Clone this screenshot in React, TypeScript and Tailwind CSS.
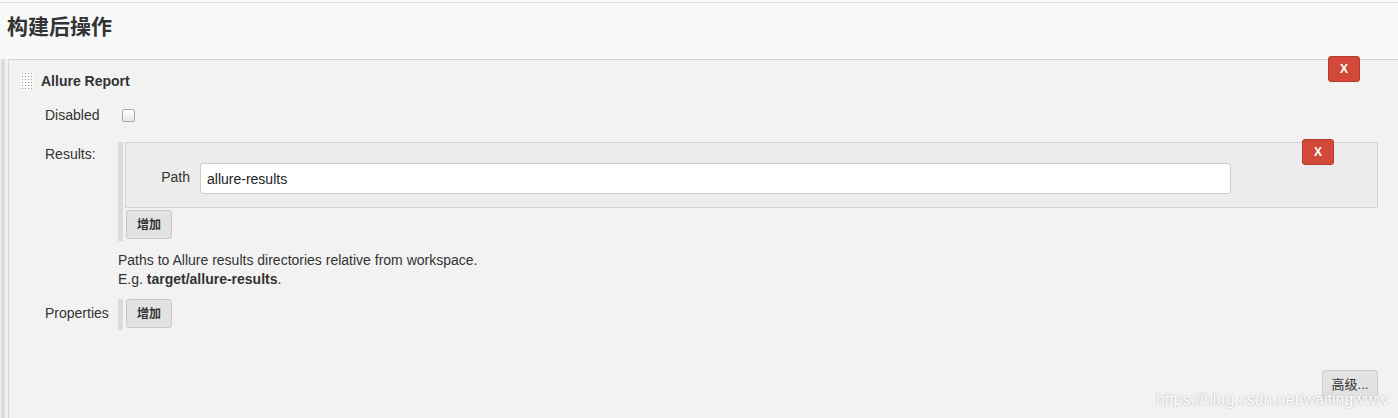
import React from "react";

function Handle() {
  const dots: React.ReactNode[] = [];
  for (let r = 0; r < 6; r++) {
    for (let c = 0; c < 4; c++) {
      dots.push(<rect key={`${r}-${c}`} x={1 + c * 3} y={1 + r * 3} width={1} height={1} fill="#9a9a9a" />);
    }
  }
  return (
    <svg width="12" height="18" viewBox="0 0 12 18" className="block">
      <rect x="0" y="0" width="12" height="18" fill="#fafafa" />
      {dots}
    </svg>
  );
}

function RedX({ className }: { className: string }) {
  return (
    <button
      className={
        "absolute w-[32px] h-[26px] rounded-[3px] bg-[#d24939] border border-[#b93a2c] text-white text-[12px] font-bold leading-none flex items-center justify-center " +
        className
      }
    >
      X
    </button>
  );
}

function AddButton() {
  return (
    <button className="ml-[3px] w-[46px] h-[29px] rounded-[3px] bg-[#e2e2e2] border border-[#c9c9c9] text-[12px] font-bold text-[#333] leading-none flex items-center justify-center">
      增加
    </button>
  );
}

export default function App() {
  return (
    <div className="relative w-[1398px] h-[418px] overflow-hidden bg-[#f9f9f9] text-[#333] font-['Liberation_Sans','Noto_Sans_CJK_SC',Arial,sans-serif]">
      <div className="mt-[2px] h-[57px] border-t border-[#dddddd] pl-[7px] pt-[8px]">
        <h2 className="text-[21px] leading-[28px] font-bold text-[#333] font-['Noto_Sans_CJK_SC','Liberation_Sans',sans-serif]">
          构建后操作
        </h2>
      </div>
      <div className="flex h-[359px]">
        <div className="w-[1px] bg-[#f2f2f2]" />
        <div className="w-[4px] bg-[#dcdcdc]" />
        <div className="w-[3px] bg-[#f2f2f2]" />
        <div className="relative flex-1 border-l border-t border-[#d5d5d5] bg-[#f2f2f2] pl-[12px] pt-[12px]">
          <RedX className="top-[-4px] right-[38px]" />
          <div className="flex items-center h-[18px] gap-[8px]">
            <Handle />
            <span className="text-[14px] font-bold text-[#333]">Allure Report</span>
          </div>
          <div className="pl-[24px]">
            <div className="mt-[14px] flex items-center h-[22px]">
              <div className="w-[73px] text-[14px]">Disabled</div>
              <span className="ml-[4px] w-[13px] h-[13px] rounded-[2px] border border-[#a6a6a6] bg-gradient-to-b from-[#ffffff] to-[#e6e6e6]" />
            </div>
            <div className="mt-[16px] flex">
              <div className="w-[73px] text-[14px] leading-[20px] mt-[2px]">Results:</div>
              <div className="flex-1 pr-[20px]">
                <div className="flex">
                  <div className="w-[5px] bg-[#dcdcdc]" />
                  <div className="flex-1 ml-[2px]">
                    <div className="relative h-[66px] border border-[#d5d5d5] bg-[#ececec] pt-[20px] flex items-start">
                      <RedX className="top-[-4px] right-[43px] h-[25px]" />
                      <div className="w-[65px] text-right text-[14px] leading-[31px] h-[31px] pr-[1px] -mt-[1px]">Path</div>
                      <input
                        readOnly
                        value="allure-results"
                        className="ml-[9px] w-[1031px] h-[31px] rounded-[3px] border border-[#cccccc] bg-white px-[6px] text-[14px] text-[#222] outline-none"
                      />
                    </div>
                    <div className="pt-[2px] pb-[2px] -ml-[2px]">
                      <AddButton />
                    </div>
                  </div>
                </div>
                <div className="mt-[10px] text-[14px] leading-[19px]">
                  <div>Paths to Allure results directories relative from workspace.</div>
                  <div>
                    E.g. <b className="font-bold">target/allure-results</b>.
                  </div>
                </div>
              </div>
            </div>
            <div className="mt-[10px] flex">
              <div className="w-[73px] text-[14px] leading-[20px] mt-[4px]">Properties</div>
              <div className="flex h-[31px]">
                <div className="w-[5px] bg-[#dcdcdc]" />
                <AddButton />
              </div>
            </div>
          </div>
          <div className="absolute top-[310px] right-[20px]">
            <button className="w-[56px] h-[29px] rounded-[3px] bg-[#e2e2e2] border border-[#c9c9c9] text-[13px] text-[#333] leading-none flex items-center justify-center">
              高级...
            </button>
          </div>
          <div className="absolute right-[10px] bottom-[9px] text-[16px] leading-[18px] text-white [text-shadow:0_0_2px_#c0c0c0,0_0_1px_#b5b5b5]">
            https://blog.csdn.net/waitingwww
          </div>
        </div>
      </div>
    </div>
  );
}
